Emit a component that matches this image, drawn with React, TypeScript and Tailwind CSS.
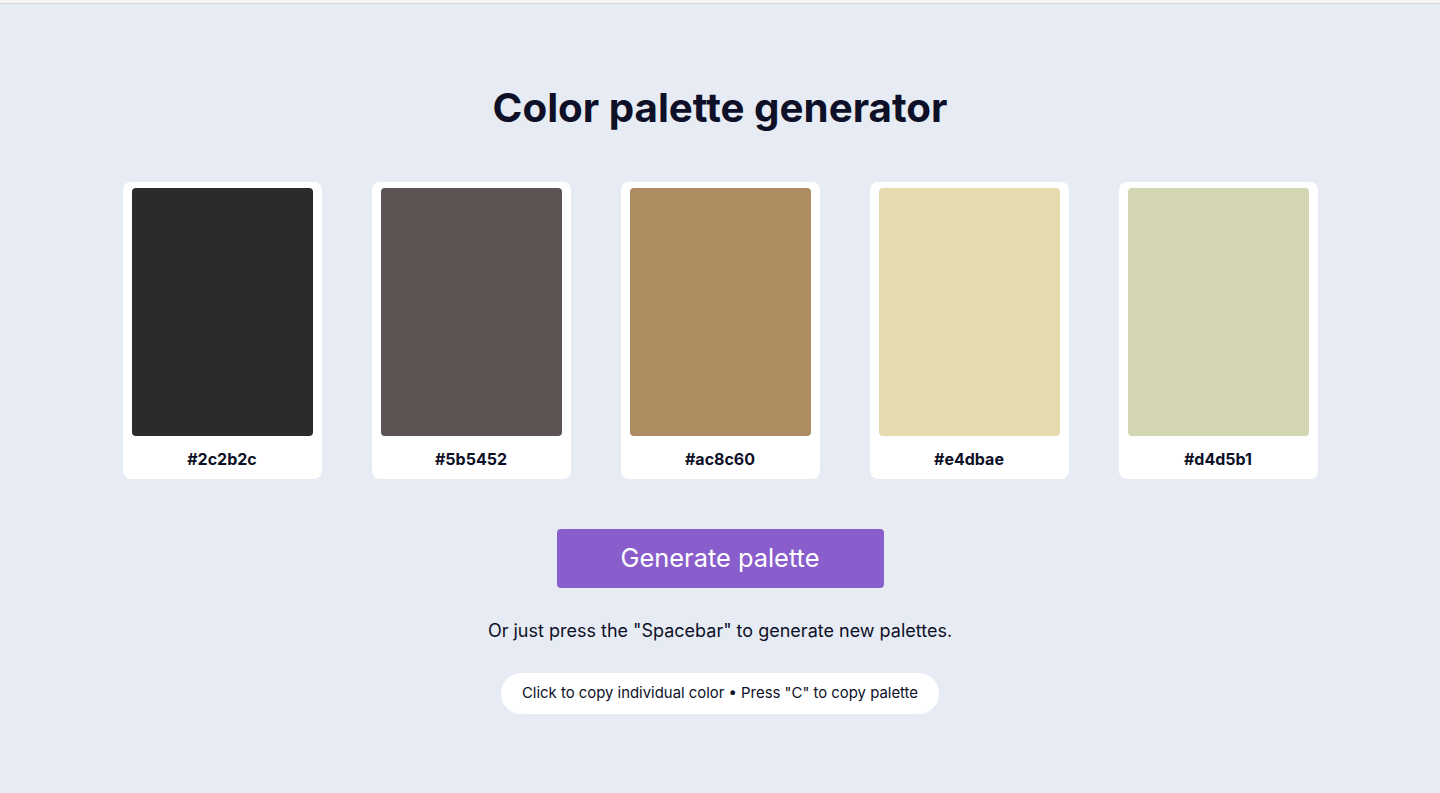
import React from 'react';

const colors = ['#2c2b2c', '#5b5452', '#ac8c60', '#e4dbae', '#d4d5b1'];

const App: React.FC = () => {
    return (
        <div className="min-h-[793px] bg-[#e7ebf4] text-[#0d1027]" style={{ fontFamily: 'Inter, "Noto Sans", sans-serif' }}>
            <div className="h-[4px] bg-[#f4f4f6] border-b border-[#d6d8dc]" />
            <main className="flex flex-col items-center pt-[80px]">
                <h1 className="text-[40.3px] leading-[48px] font-bold">Color palette generator</h1>

                <div className="mt-[50px] flex gap-[50px]">
                    {colors.map((hex) => (
                        <div key={hex} className="w-[199px] bg-white rounded-lg px-[9px] pt-[6px] cursor-pointer">
                            <div className="h-[248px] rounded-[4px]" style={{ backgroundColor: hex }} />
                            <p className="pt-[13px] pb-[10px] text-center text-base leading-5 font-bold">{hex}</p>
                        </div>
                    ))}
                </div>

                <button className="mt-[50px] w-[327px] h-[59px] rounded-[4px] bg-[#895ecc] text-white text-[25.4px] font-normal">
                    Generate palette
                </button>

                <p className="mt-[29px] text-[18px] leading-7">Or just press the "Spacebar" to generate new palettes.</p>

                <div className="mt-[28px] h-[41px] px-[21px] flex items-center rounded-full bg-white text-[14.9px]">
                    Click to copy individual color • Press "C" to copy palette
                </div>
            </main>
        </div>
    );
};

export default App;
